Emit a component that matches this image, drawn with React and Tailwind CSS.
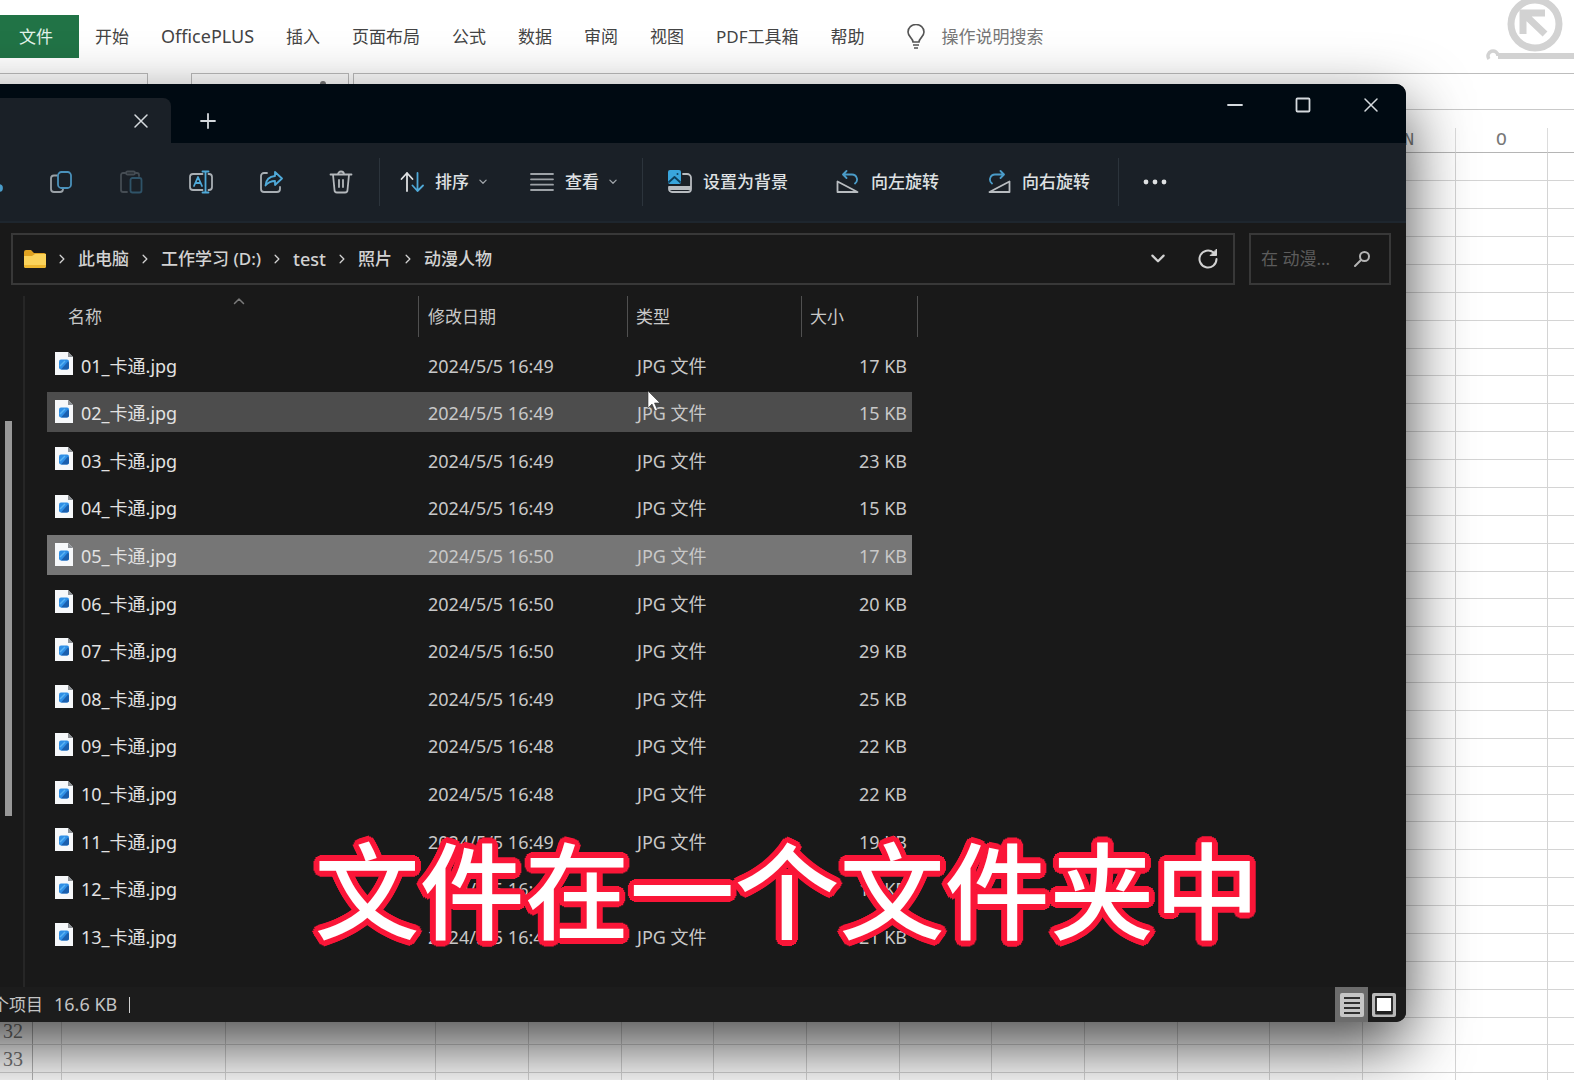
import { useState } from 'react';

const ribbonTabs = ['开始', 'OfficePLUS', '插入', '页面布局', '公式', '数据', '审阅', '视图', 'PDF工具箱', '帮助'];

const columns = [
  { name: 'A', width: 'w-[29px]' },
  { name: 'B', width: 'w-[164px]' },
  { name: 'C', width: 'w-[210px]' },
  { name: 'D', width: 'w-[93px]' },
  { name: 'E', width: 'w-[93px]' },
  { name: 'F', width: 'w-[92px]' },
  { name: 'G', width: 'w-[93px]' },
  { name: 'H', width: 'w-[93px]' },
  { name: 'I', width: 'w-[92px]' },
  { name: 'J', width: 'w-[93px]' },
  { name: 'K', width: 'w-[93px]' },
  { name: 'L', width: 'w-[92px]' },
  { name: 'M', width: 'w-[93px]' },
  { name: 'N', width: 'w-[93px]' },
  { name: 'O', width: 'w-[92px]' },
  { name: '', width: 'w-[93px]' },
];

const files = [
  { name: '01_卡通.jpg', date: '2024/5/5 16:49', size: '17 KB' },
  { name: '02_卡通.jpg', date: '2024/5/5 16:49', size: '15 KB' },
  { name: '03_卡通.jpg', date: '2024/5/5 16:49', size: '23 KB' },
  { name: '04_卡通.jpg', date: '2024/5/5 16:49', size: '15 KB' },
  { name: '05_卡通.jpg', date: '2024/5/5 16:50', size: '17 KB' },
  { name: '06_卡通.jpg', date: '2024/5/5 16:50', size: '20 KB' },
  { name: '07_卡通.jpg', date: '2024/5/5 16:50', size: '29 KB' },
  { name: '08_卡通.jpg', date: '2024/5/5 16:49', size: '25 KB' },
  { name: '09_卡通.jpg', date: '2024/5/5 16:48', size: '22 KB' },
  { name: '10_卡通.jpg', date: '2024/5/5 16:48', size: '22 KB' },
  { name: '11_卡通.jpg', date: '2024/5/5 16:49', size: '19 KB' },
  { name: '12_卡通.jpg', date: '2024/5/5 16:49', size: '17 KB' },
  { name: '13_卡通.jpg', date: '2024/5/5 16:49', size: '21 KB' },
];

const path = ['此电脑', '工作学习 (D:)', 'test', '照片', '动漫人物'];

function Icon({ children, className = 'size-6', box = '0 0 24 24' }) {
  return (
    <svg
      viewBox={box}
      className={`${className} shrink-0`}
      fill="none"
      stroke="currentColor"
      strokeWidth="1.8"
      strokeLinecap="round"
      strokeLinejoin="round"
      aria-hidden="true"
    >
      {children}
    </svg>
  );
}

function Chevron({ className, d = 'M3 5l5 5 5-5' }) {
  return (
    <Icon className={className} box="0 0 16 16">
      <path d={d} strokeWidth="2" />
    </Icon>
  );
}

function CloseIcon() {
  return (
    <Icon className="size-4" box="0 0 16 16">
      <path d="M2 2l12 12M14 2L2 14" strokeWidth="1.5" />
    </Icon>
  );
}

function FileIcon() {
  return (
    <svg viewBox="0 0 18 23" className="w-[18px] h-[23px] shrink-0 mb-1" aria-hidden="true">
      <path d="M0 0h13l5 5v18H0z" fill="#f6f8fa" />
      <path d="M13 0v5h5z" fill="#8d9196" />
      <rect x="4" y="7.500" width="10" height="10" rx="2" fill="#2f8fe6" />
      <path d="M6 17.500l7-8 1 1v5a2 2 0 0 1-2 2z" fill="#1a5fae" />
      <path d="M5 14l5-5" stroke="#5bb4f3" strokeWidth="1.500" />
    </svg>
  );
}

function Divider() {
  return <div className="w-px h-12 bg-[#2c343c] shrink-0" />;
}

function Spreadsheet() {
  return (
    <div>
      <header className="flex items-start justify-between h-[73px]">
        <nav className="flex items-center h-[43px] mt-[15px] text-[17px] text-[#444444]">
          <button className="w-[79px] h-full pl-[19px] mr-4 text-left bg-[#217346] text-[#e4f3ea]">文件</button>
          <div className="flex items-center gap-8">
            {ribbonTabs.map((tab) => (
              <button key={tab} className={tab === 'OfficePLUS' ? 'text-[18px]' : ''}>{tab}</button>
            ))}
          </div>
          <button className="flex items-center gap-4 ml-[41px] text-[#777777]">
            <svg viewBox="0 0 20 26" className="w-5 h-[26px]" fill="none" stroke="#555555" strokeWidth="1.600" aria-hidden="true">
              <path d="M7 18c0-4-5-5-5-10a8 7.500 0 0 1 16 0c0 5-5 6-5 10z" />
              <path d="M7 21h6M8 24h4" />
            </svg>
            操作说明搜索
          </button>
        </nav>
        <svg viewBox="0 0 88 62" className="w-[88px] h-[62px]" fill="none" stroke="#d2d2d2" aria-hidden="true">
          <circle cx="49" cy="24" r="24" strokeWidth="7" />
          <path d="M37 34V13h22M38 14l21 20" strokeWidth="7" />
          <path d="M12 56h76" strokeWidth="6" />
          <path d="M3 59a5 5 0 1 1 9-3" strokeWidth="3.500" />
        </svg>
      </header>

      <div className="flex h-[37px] border-b border-[#c9c9c9]">
        <div className="w-[148px] border-t border-r border-[#bdbdbd]" />
        <div className="w-[158px] ml-[43px] border border-b-0 border-[#bdbdbd] flex justify-end pr-[21px] pt-1">
          <svg viewBox="0 0 8 8" className="size-2" aria-hidden="true">
            <circle cx="4" cy="6" r="3" fill="#777777" />
          </svg>
        </div>
        <div className="flex-1 ml-1 border-t border-l border-[#bdbdbd]" />
      </div>

      <table className="table-fixed w-max mt-[18px] border-separate border-spacing-0 text-[18px] leading-6 text-[#777777]">
        <thead className="font-['Liberation_Mono',monospace]">
          <tr className="h-6">
            <th className="w-[33px] border-r border-b border-[#b5b5b5]" />
            {columns.map((col, i) => (
              <th key={i} className={`${col.width} p-0 font-normal border-r border-b border-r-[#dcdcdc] border-b-[#b5b5b5]`}>
                {col.name}
              </th>
            ))}
          </tr>
        </thead>
        <tbody className="font-['Liberation_Serif',serif]">
          {Array.from({ length: 34 }, (_, row) => (
            <tr key={row} className="h-7 nth-[8n]:h-[27px]">
              <th className="p-0 pr-[9px] text-[20px] font-normal text-right border-r border-b border-r-[#b5b5b5] border-b-[#d4d4d4]">
                {row < 33 && row + 1}
              </th>
              {columns.map((col, i) => (
                <td key={i} className="p-0 border-r border-b border-[#d4d4d4]" />
              ))}
            </tr>
          ))}
        </tbody>
      </table>
    </div>
  );
}

function TitleBar() {
  return (
    <div className="flex h-[59px] pr-px bg-[#000a12] text-[#d5dade]">
      <div className="flex items-center justify-end self-end w-[267px] h-[45px] pr-[22px] rounded-tr-lg bg-[#1a2027]">
        <button aria-label="关闭标签页"><CloseIcon /></button>
      </div>
      <button aria-label="新建标签页" className="self-end h-[45px] ml-7">
        <Icon className="size-[18px]" box="0 0 18 18">
          <path d="M9 2v14M2 9h14" />
        </Icon>
      </button>
      <div className="flex ml-auto h-[42px]">
        <button aria-label="最小化" className="flex items-center justify-center w-[68px]">
          <Icon className="size-4" box="0 0 16 16"><path d="M1 8h14" /></Icon>
        </button>
        <button aria-label="最大化" className="flex items-center justify-center w-[68px]">
          <Icon className="size-4" box="0 0 16 16"><rect x="1.500" y="1.500" width="13" height="13" rx="1" /></Icon>
        </button>
        <button aria-label="关闭" className="flex items-center justify-center w-[68px]"><CloseIcon /></button>
      </div>
    </div>
  );
}

function Toolbar() {
  return (
    <div className="flex items-center h-20 pl-24 bg-[#1a2027] border-b-2 border-[#1e262e] text-[17px] font-medium text-[#dfe1e3] whitespace-nowrap">
      <button aria-label="剪切" className="w-[26px]">
        <Icon className="w-1 h-6" box="0 0 4 24">
          <circle cx="-1" cy="18" r="3" fill="#4a9cc9" stroke="#4a9cc9" />
        </Icon>
      </button>
      <button aria-label="复制" className="flex justify-center w-[70px] text-[#9aa1a7]">
        <Icon>
          <path d="M8 5.500H5a3 3 0 0 0-3 3V19a3 3 0 0 0 3 3h6a3 3 0 0 0 3-2.500" />
          <rect x="9" y="2" width="13" height="16" rx="3.500" stroke="#4a91bb" />
        </Icon>
      </button>
      <button aria-label="粘贴" className="flex justify-center w-[70px] text-[#454c53]">
        <Icon>
          <path d="M7 3H4a2 2 0 0 0-2 2v15a2 2 0 0 0 2 2h4M16 3h2a2 2 0 0 1 2 2v1" />
          <rect x="7" y="1.500" width="9" height="3" rx="1.500" />
          <rect x="11.500" y="8" width="11" height="14.500" rx="2" stroke="#2f5368" />
        </Icon>
      </button>
      <button aria-label="重命名" className="flex justify-center w-[70px] text-[#a9afb4]">
        <Icon>
          <path d="M13.500 4H4a3 3 0 0 0-3 3v10a3 3 0 0 0 3 3h9.500M19.500 4h.5a3 3 0 0 1 3 3v10a3 3 0 0 1-3 3h-.5" />
          <path d="M5 16l4-9 4 9M6.500 13h5M16.500 1.500v21M13.500 1.500h6M13.500 22.500h6" stroke="#4fa9d8" />
        </Icon>
      </button>
      <button aria-label="共享" className="flex justify-center w-[70px] text-[#a9afb4]">
        <Icon>
          <path d="M8 3H5a3 3 0 0 0-3 3v13a3 3 0 0 0 3 3h13a3 3 0 0 0 3-3v-2" />
          <path d="M16 2l7 6.500-7 6.500v-4c-4.500 0-7 1.500-9.500 4.500.5-5.500 3.500-9 9.500-9.500z" stroke="#4fa9d8" />
        </Icon>
      </button>
      <button aria-label="删除" className="flex justify-center w-[70px] text-[#b4b8bc]">
        <Icon>
          <path d="M1.500 4.500h21M9 4.500a3 3 0 0 1 6 0M4 4.500l1.500 15.500a2.500 2.500 0 0 0 2.500 2.500h8a2.500 2.500 0 0 0 2.500-2.500L20 4.500M10 10v7M14 10v7" />
        </Icon>
      </button>
      <div className="ml-[3px]"><Divider /></div>
      <button className="flex items-center ml-5">
        <Icon>
          <path d="M7 21V3M1.500 9L7 3l5.500 6" />
          <path d="M17.500 3v18M12.500 15.500l5 5.500 5.500-5.500" stroke="#4fa9d8" />
        </Icon>
        <span className="ml-[11px]">排序</span>
        <Chevron className="size-[10px] ml-[9px] text-[#a0a5aa]" />
      </button>
      <button className="flex items-center ml-[42px]">
        <Icon className="size-6 text-[#9da2a7]">
          <path d="M1 4h22M1 9.300h22M1 14.700h22M1 20h22" />
        </Icon>
        <span className="ml-[11px]">查看</span>
        <Chevron className="size-[10px] ml-[9px] text-[#a0a5aa]" />
      </button>
      <div className="ml-6"><Divider /></div>
      <button className="flex items-center gap-[11px] ml-[25px]">
        <Icon>
          <path d="M15 4h4a4 4 0 0 1 4 4v11a3 3 0 0 1-3 3H4a3 3 0 0 1-3-3v-2h22M1 19h22" stroke="#b8bcc0" />
          <rect x="0" y="0" width="13" height="14" rx="2" fill="#39a5dc" stroke="none" />
          <path d="M1 12l5.500-5 5.500 5" stroke="#0c3f5c" />
          <circle cx="9.500" cy="4" r="1" fill="#0c3f5c" stroke="none" />
        </Icon>
        设置为背景
      </button>
      <button className="flex items-center gap-[11px] ml-12">
        <Icon>
          <path d="M1.500 11.500v10.500h20z" stroke="#b8bcc0" />
          <path d="M8 4.500h8a5 5 0 0 1 3 9M10.500 1L7 4.500l3.500 3.500" stroke="#4a9cc9" />
        </Icon>
        向左旋转
      </button>
      <button className="flex items-center gap-[11px] ml-12">
        <Icon>
          <path d="M22.500 11.500v10.500h-20z" stroke="#b8bcc0" />
          <path d="M16 4.500H8a5 5 0 0 0-3 9M13.500 1L17 4.500 13.500 8" stroke="#4a9cc9" />
        </Icon>
        向右旋转
      </button>
      <div className="ml-7"><Divider /></div>
      <button aria-label="查看更多" className="ml-6">
        <Icon className="w-6 h-6">
          <g fill="currentColor" stroke="none">
            <circle cx="3" cy="12" r="2.400" />
            <circle cx="12" cy="12" r="2.400" />
            <circle cx="21" cy="12" r="2.400" />
          </g>
        </Icon>
      </button>
    </div>
  );
}

function AddressBar() {
  return (
    <div className="flex gap-[14px] pt-[10px] pl-[107px] pr-[15px] text-[17px]">
      <div className="flex flex-1 items-center h-[52px] pl-[11px] pr-[14px] border-2 border-[#383838] font-medium text-[#d2d2d2] whitespace-nowrap">
        <svg viewBox="0 0 22 18" className="w-[22px] h-[18px] shrink-0" aria-hidden="true">
          <path d="M0 2a2 2 0 0 1 2-2h5l3 3h10a2 2 0 0 1 2 2v3H0z" fill="#e0a321" />
          <path d="M0 6h8l3-2h11v12a2 2 0 0 1-2 2H2a2 2 0 0 1-2-2z" fill="#fbd35a" />
          <path d="M0 15h22v1a2 2 0 0 1-2 2H2a2 2 0 0 1-2-2z" fill="#edb62f" />
        </svg>
        {path.map((part) => (
          <div key={part} className="flex items-center">
            <span className="flex justify-center w-8">
              <Chevron className="size-[10px]" d="M5 2l6 6-6 6" />
            </span>
            <button className={part === 'test' ? 'text-[18px]' : ''}>{part}</button>
          </div>
        ))}
        <button aria-label="以前的位置" className="ml-auto">
          <Chevron className="size-[18px]" />
        </button>
        <button aria-label="刷新" className="ml-[30px]">
          <Icon className="size-[22px]" box="0 0 22 22">
            <path d="M19.500 11a8.500 8.500 0 1 1-3-6.500" strokeWidth="2" />
            <path d="M19.500 1.500v6h-6z" fill="currentColor" strokeWidth="1" />
          </Icon>
        </button>
      </div>
      <label className="flex items-center w-[142px] h-[52px] px-[10px] border-2 border-[#383838]">
        <input aria-label="搜索" placeholder="在 动漫..." className="w-[92px] bg-transparent outline-none text-[#dcdcdc] placeholder:text-[#5c5c5c]" />
        <Icon className="size-[18px] text-[#b4b4b4]" box="0 0 18 18">
          <circle cx="11.500" cy="6.500" r="4.500" strokeWidth="2" />
          <path d="M8 10l-6 6" strokeWidth="2" />
        </Icon>
      </label>
    </div>
  );
}

function FileList({ selected, onSelect }) {
  return (
    <div className="flex pl-24 h-[702px]">
      <div className="w-[25px] mt-[11px] pl-[5px] border-r-2 border-[#262626]">
        <div className="w-[7px] h-[395px] mt-[125px] bg-[#989898]" />
      </div>
      <div className="pt-[3px] pl-[22px]">
        <table className="table-fixed w-[871px] border-separate border-spacing-x-0 border-spacing-y-2 text-[18px] leading-6 text-[#c8c8c8]">
          <thead>
            <tr className="h-[41px] text-[17px] text-left">
              <th className="relative w-[372px] p-0 pl-[21px] font-normal border-r border-[#505050]">
                名称
                <Chevron className="absolute top-0 left-[186px] size-3 text-[#7a7a7a]" d="M2 10l6-6 6 6" />
              </th>
              <th className="w-[209px] p-0 pl-[9px] font-normal border-r border-[#505050]">修改日期</th>
              <th className="w-[174px] p-0 pl-2 font-normal border-r border-[#505050]">类型</th>
              <th className="w-[110px] p-0 pl-2 font-normal">大小</th>
              <td className="w-[6px] p-0 border-r border-[#505050]" />
            </tr>
          </thead>
          <tbody>
            {files.map((file, i) => {
              // row under the pointer is dimmer than the selected one
              const bg = i === selected ? 'bg-[#767676]' : i === 1 ? 'bg-[#4d4d4d]' : '';
              return (
                <tr key={file.name} className="h-10 nth-[5n+1]:h-[39px] nth-[5n+3]:h-[39px]" onClick={() => onSelect(i)}>
                  <td className={`p-0 pt-[2px] pl-2 text-[#e2e2e2] ${bg}`}>
                    <div className="flex items-center gap-2">
                      <FileIcon />
                      {file.name}
                    </div>
                  </td>
                  <td className={`p-0 pt-[2px] pl-[9px] ${bg}`}>{file.date}</td>
                  <td className={`p-0 pt-[2px] pl-[9px] ${bg}`}>JPG 文件</td>
                  <td className={`p-0 pt-[2px] pr-[5px] text-right ${bg}`}>{file.size}</td>
                </tr>
              );
            })}
          </tbody>
        </table>
      </div>
    </div>
  );
}

function StatusBar() {
  return (
    <div className="flex items-center h-[35px] pl-[88px] pr-[10px] bg-[#1c1c1c] text-[#c4c4c4]">
      <span className="text-[17px]">个项目</span>
      <span className="ml-[11px] text-[18px]">16.6 KB</span>
      <div className="w-px h-4 ml-3 bg-[#d0d0d0]" />
      <button aria-label="详细信息" className="flex items-center justify-center w-[33px] h-full ml-auto bg-[#6c6c6c]">
        <Icon>
          <rect x="0" y="0" width="24" height="24" rx="2" fill="#c6c6c6" stroke="none" />
          <path d="M4 5h16M4 10h16M4 15h16M4 20h16" stroke="#303030" strokeLinecap="butt" />
        </Icon>
      </button>
      <button aria-label="大图标" className="ml-1">
        <Icon>
          <rect x="0" y="0" width="24" height="24" rx="2" fill="#b9b9b9" stroke="none" />
          <rect x="4" y="4" width="16" height="15" fill="#ffffff" stroke="#202020" />
          <path d="M4 20.500h16" stroke="#202020" />
        </Icon>
      </button>
    </div>
  );
}

function Explorer() {
  const [selected, setSelected] = useState(4);

  return (
    <section className="absolute top-[84px] -left-24 right-[168px] overflow-hidden rounded-[10px] bg-[#191919] shadow-[0_24px_64px_rgba(0,0,0,0.72)]">
      <TitleBar />
      <Toolbar />
      <AddressBar />
      <FileList selected={selected} onSelect={setSelected} />
      <StatusBar />
    </section>
  );
}

export default function App() {
  return (
    <div lang="zh-CN" className="relative h-screen overflow-hidden bg-white font-['Noto_Sans','Noto_Sans_CJK_SC',sans-serif]">
      <Spreadsheet />
      <Explorer />

      <svg viewBox="0 0 14 22" className="absolute top-[390px] left-[647px] w-[14px] h-[22px]" aria-hidden="true">
        <path d="M1 1v17l4-4 3 7 2.500-1-3-7H13z" fill="#ffffff" stroke="#333333" strokeWidth="0.600" />
      </svg>

      {/* subtitle: a ring of hard shadows gives the outline round corners */}
      <p className="absolute inset-x-0 top-[815px] text-center text-[105px] leading-[152px] font-medium text-white whitespace-nowrap pointer-events-none [text-shadow:6px_0_#fa1638,5px_2px_#fa1638,4px_4px_#fa1638,2px_5px_#fa1638,0_6px_#fa1638,-2px_5px_#fa1638,-4px_4px_#fa1638,-5px_2px_#fa1638,-6px_0_#fa1638,-5px_-2px_#fa1638,-4px_-4px_#fa1638,-2px_-5px_#fa1638,0_-6px_#fa1638,2px_-5px_#fa1638,4px_-4px_#fa1638,5px_-2px_#fa1638]">
        文件在一个文件夹中
      </p>
    </div>
  );
}
